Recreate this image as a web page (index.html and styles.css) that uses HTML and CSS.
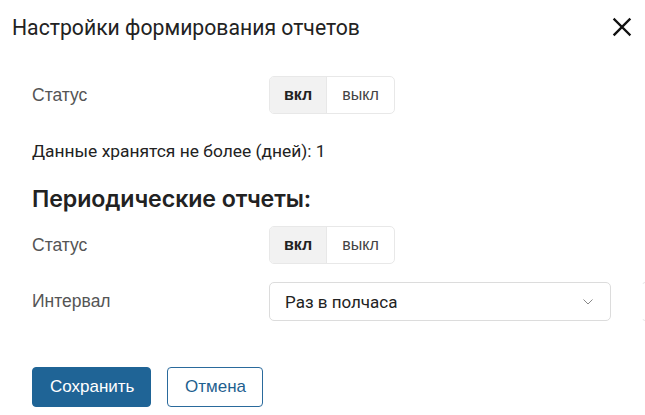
FILE: index.html
```html
<!DOCTYPE html>
<html lang="ru">
<head>
<meta charset="utf-8">
<link rel="stylesheet" href="styles.css">
</head>
<body>
<div class="dialog">
  <div class="header">
    <h1 class="title">Настройки формирования отчетов</h1>
    <button class="close" aria-label="Закрыть">
      <svg width="20" height="20" viewBox="0 0 20 20"><path d="M2.5 2.5 L17.5 17.5 M17.5 2.5 L2.5 17.5" stroke="#111" stroke-width="2.4" stroke-linecap="square"/></svg>
    </button>
  </div>
  <div class="body">
    <div class="row row-first">
      <div class="label">Статус</div>
      <div class="toggle"><span class="seg seg-on">вкл</span><span class="seg">выкл</span></div>
    </div>
    <div class="info">Данные хранятся не более (дней): 1</div>
    <h2 class="section">Периодические отчеты:</h2>
    <div class="row row-status2">
      <div class="label">Статус</div>
      <div class="toggle"><span class="seg seg-on">вкл</span><span class="seg">выкл</span></div>
    </div>
    <div class="row row-interval">
      <div class="label">Интервал</div>
      <div class="select">
        <span>Раз в полчаса</span>
        <svg width="12" height="8" viewBox="0 0 12 8"><path d="M1.5 1.5 L6 6 L10.5 1.5" stroke="#888" stroke-width="1" fill="none"/></svg>
      </div>
      <div class="extra"></div>
    </div>
    <div class="actions">
      <button class="btn btn-primary">Сохранить</button>
      <button class="btn btn-outline">Отмена</button>
    </div>
  </div>
</div>
</body>
</html>
```
FILE: styles.css
```css
html, body {
  margin: 0;
  padding: 0;
  background: #fff;
  overflow: hidden;
}
.dialog {
  width: 645px;
  height: 415px;
  font-family: "Liberation Sans", Arial, sans-serif;
  color: #222;
}
.header {
  display: flex;
  align-items: center;
  justify-content: space-between;
  padding: 13px 12px 0 12px;
  height: 28px;
}
.title {
  margin: 0;
  font-family: Roboto, sans-serif;
  font-weight: 400;
  font-size: 21.2px;
  color: #222;
}
.close {
  border: 0;
  background: none;
  padding: 0;
  width: 20px;
  height: 20px;
  margin-right: 1px;
  display: flex;
}
.body {
  padding: 0 0 0 32px;
}
.row {
  display: flex;
  align-items: center;
}
.row-first {
  margin-top: 35px;
}
.label {
  width: 237px;
  flex-shrink: 0;
  font-size: 17.5px;
  color: #555;
}
.toggle {
  display: flex;
  height: 38px;
  border: 1px solid #e8e8e8;
  border-radius: 5px;
  box-sizing: border-box;
  overflow: hidden;
}
.seg {
  display: flex;
  align-items: center;
  justify-content: center;
  font-size: 16px;
  color: #444;
  padding: 0 15px;
}
.seg-on {
  background: #f2f2f2;
  color: #222;
  font-weight: 700;
  border-right: 1px solid #e8e8e8;
  padding: 0 14px;
}
.info {
  margin-top: 27px;
  font-family: Roboto, sans-serif;
  font-size: 17.4px;
  color: #222;
}
.section {
  margin: 24px 0 0 0;
  font-size: 23.2px;
  font-weight: 600;
  font-family: Inter, sans-serif;
  color: #222;
  letter-spacing: -0.1px;
}
.row-status2 {
  margin-top: 13px;
}
.row-interval {
  margin-top: 18px;
}
.select {
  width: 342px;
  height: 39px;
  flex-shrink: 0;
  box-sizing: border-box;
  border: 1px solid #dcdcdc;
  border-radius: 5px;
  display: flex;
  align-items: center;
  justify-content: space-between;
  padding: 0 16px 0 15px;
  font-family: Roboto, sans-serif;
  font-size: 17px;
  color: #222;
}
.extra {
  margin-left: 30px;
  width: 20px;
  height: 39px;
  flex-shrink: 0;
  box-sizing: border-box;
  border: 1px solid #e6e6e6;
  border-right: 0;
  border-radius: 5px 0 0 5px;
  border-left-color: #fff;
}
.actions {
  display: flex;
  gap: 16px;
  margin-top: 46px;
}
.btn {
  height: 40px;
  border-radius: 4px;
  font-family: "Liberation Sans", Arial, sans-serif;
  font-size: 17px;
  padding: 0 17px;
  cursor: pointer;
  box-sizing: border-box;
}
.btn-primary {
  background: #1f6496;
  color: #fff;
  border: 1px solid #1f6496;
  width: 119px;
}
.btn-outline {
  background: #fff;
  color: #1f5f8f;
  border: 1px solid #2a6a9c;
  width: 96px;
}
```
